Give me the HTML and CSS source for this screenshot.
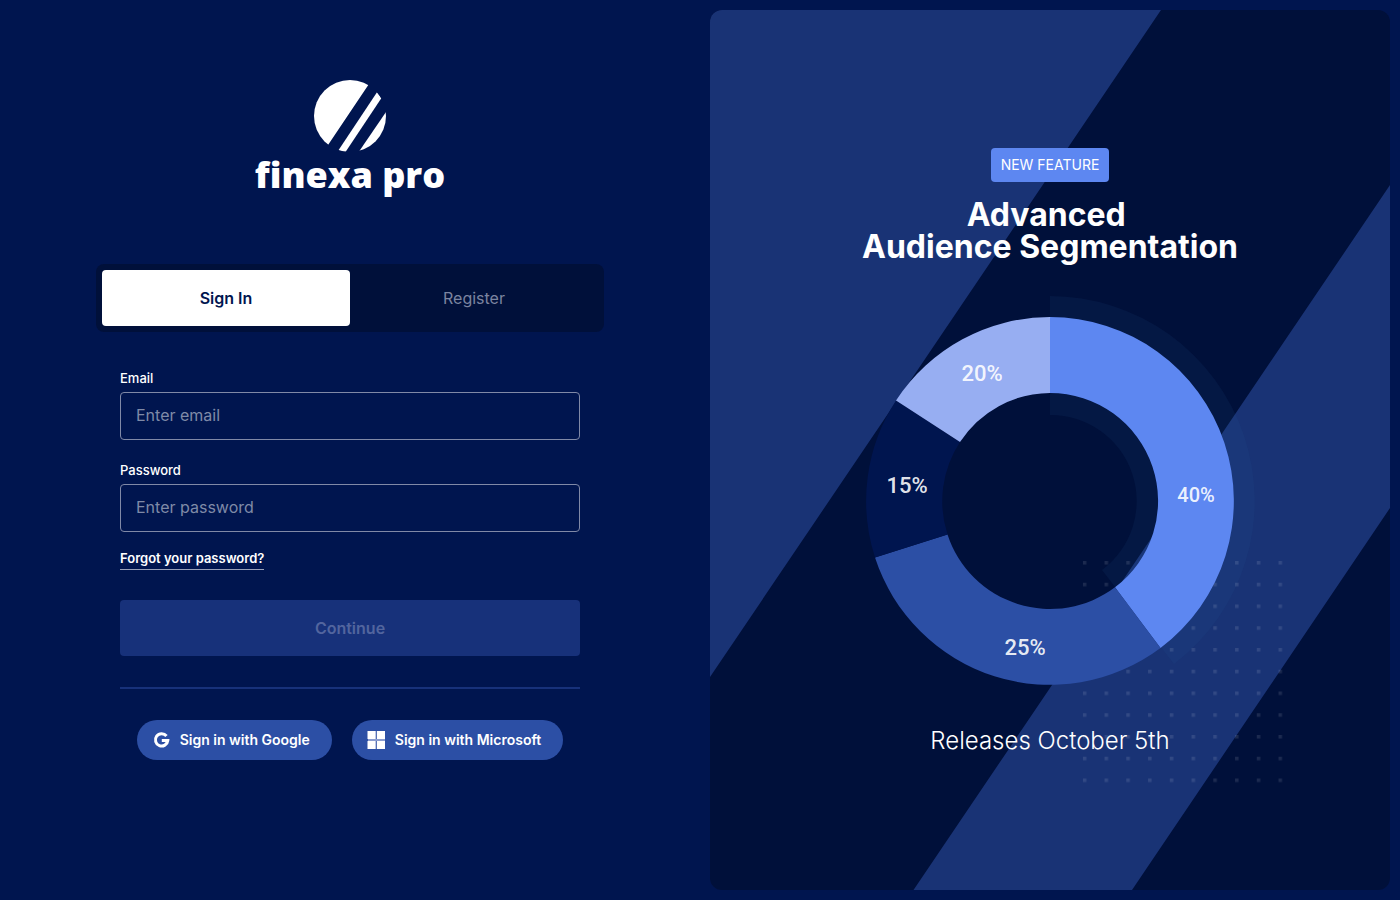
FILE: index.html
```html
<!DOCTYPE html>
<html lang="en">
<head>
<meta charset="utf-8">
<meta name="viewport" content="width=device-width, initial-scale=1">
<title>Finexa Pro – Sign In</title>
<link rel="stylesheet" href="styles.css">
</head>
<body>
<main class="layout">
  <section class="auth">
    <div class="brand">
      <svg class="brand-mark" viewBox="0 0 72 72" aria-hidden="true">
        <clipPath id="disc"><circle cx="36" cy="36" r="36"/></clipPath>
        <g fill="#fff" clip-path="url(#disc)">
          <path d="M0 0H57.600L54.300 5L14.700 64L9.400 72H0Z"/>
          <path d="M63 12.300L67.300 18.300L31.500 72H23.300Z"/>
          <path d="M72 32L44.700 72H72Z"/>
        </g>
      </svg>
      <span class="brand-name">finexa pro</span>
    </div>
    <div class="panel">
      <div class="tabs" role="tablist">
        <button class="tab tab-active" type="button" role="tab" aria-selected="true">Sign In</button>
        <button class="tab" type="button" role="tab" aria-selected="false">Register</button>
      </div>
      <form class="form">
        <div class="field">
          <label for="email">Email</label>
          <input id="email" type="email" placeholder="Enter email">
        </div>
        <div class="field">
          <label for="password">Password</label>
          <input id="password" type="password" placeholder="Enter password">
        </div>
        <a class="forgot" href="#forgot">Forgot your password?</a>
        <button class="submit" type="submit" disabled>Continue</button>
        <hr class="divider">
        <div class="social">
          <button class="pill" type="button">
            <svg class="pill-icon" viewBox="0 0 20 20" aria-hidden="true"><path d="M15.500 6A6.200 6.200 0 1 0 16.800 10.500H10.800" fill="none" stroke="#fff" stroke-width="3"/></svg>
            Sign in with Google
          </button>
          <button class="pill" type="button">
            <svg class="pill-icon" viewBox="0 0 20 20" aria-hidden="true"><path fill="#8a9ccf" d="M2 9h17v2H2z"/><path fill="#fff" d="M1.500 1h8.200v8H1.500zM10.800 1H19v8h-8.200zM1.500 11h8.200v8H1.500zM10.800 11H19v8h-8.200z"/></svg>
            Sign in with Microsoft
          </button>
        </div>
      </form>
    </div>
  </section>
  <aside class="promo">
    <svg class="promo-bg" viewBox="0 0 680 880" preserveAspectRatio="none" aria-hidden="true">
      <path fill="#193375" d="M0 0H451L0 667ZM680 175V498L422 880H203.500Z"/>
    </svg>
    <div class="promo-content">
      <span class="badge">NEW FEATURE</span>
      <h1 class="promo-title"><span class="title-line">Advanced&nbsp;</span><span class="title-line">Audience Segmentation</span></h1>
      <svg class="chart" viewBox="-205 -205 410 410" role="img" aria-label="Audience segments">
        <defs>
          <pattern id="dots" x="32.800" y="60" width="21.750" height="21.750" patternUnits="userSpaceOnUse">
            <rect width="3.500" height="3.500" fill="#fff" fill-opacity=".11"/>
          </pattern>
        </defs>
        <path fill="#2a5f9c" fill-opacity=".1" d="M0-205A205 205 0 0 1 124 163L52 69A86 86 0 0 0 0-86Z"/>
        <rect x="32.800" y="60" width="200" height="222" fill="url(#dots)"/>
        <path fill="#5d87f1" d="M0-184A184 184 0 0 1 110.500 147L65 86.300A108 108 0 0 0 0-108Z"/>
        <path fill="#2c4fa5" d="M110.500 147A184 184 0 0 1-175 56.500L-102.500 33.500A108 108 0 0 0 65 86.300Z"/>
        <path fill="#00154f" d="M-175 56.500A184 184 0 0 1-154-100.500L-90-59A108 108 0 0 0-102.500 33.500Z"/>
        <path fill="#97aef2" d="M-154-100.500A184 184 0 0 1 0-184V-108A108 108 0 0 0-90-59Z"/>
        <g class="chart-labels">
          <text x="-68" y="-120">20%</text>
          <text class="label-small" x="146" y="1">40%</text>
          <text x="-143" y="-8">15%</text>
          <text x="-25" y="154">25%</text>
        </g>
      </svg>
      <p class="release">Releases October 5th</p>
    </div>
  </aside>
</main>
</body>
</html>
```
FILE: styles.css
```css
*,
*::before,
*::after {
  box-sizing: border-box;
}

body {
  margin: 0;
  background: #00154f;
  color: #fff;
  font-family: Inter, "Liberation Sans", sans-serif;
}

button,
input {
  font: inherit;
  color: inherit;
}

.layout {
  display: grid;
  grid-template-columns: 1fr 1fr;
  min-height: 100vh;
}

.auth {
  display: flex;
  flex-direction: column;
  align-items: center;
  padding: 80px 24px 40px;
}

.brand {
  display: flex;
  flex-direction: column;
  align-items: center;
  margin-bottom: 64px;
}

.brand-mark {
  width: 72px;
  height: 72px;
}

.brand-name {
  margin-bottom: 2px;
  font-family: "Open Sans", "Noto Sans", sans-serif;
  font-size: 36px;
  font-weight: 800;
  font-variant-ligatures: none;
  line-height: 46px;
}

.panel {
  width: 100%;
  max-width: 508px;
}

.tabs {
  display: grid;
  grid-template-columns: 1fr 1fr;
  padding: 6px;
  border-radius: 8px;
  background: #00103a;
}

.tab {
  height: 56px;
  padding: 0;
  border: 0;
  border-radius: 4px;
  background: transparent;
  color: #7b84a0;
  font-size: 16px;
}

.tab-active {
  background: #fff;
  color: #00154f;
  font-weight: 600;
}

.form {
  display: flex;
  flex-direction: column;
  padding: 36px 24px 0;
}

.field {
  display: flex;
  flex-direction: column;
  margin-bottom: 20px;
}

.field label {
  margin-bottom: 4px;
  font-size: 13px;
  font-weight: 500;
  line-height: 20px;
}

.field input {
  width: 100%;
  height: 48px;
  padding: 0 15px 2px;
  border: 1px solid #8089a7;
  border-radius: 4px;
  outline: 0;
  background: transparent;
  font-size: 16px;
}

.field input::placeholder {
  color: #7f8aa7;
  opacity: 1;
}

.forgot {
  align-self: flex-start;
  margin: -2px 0 30px;
  padding-bottom: 2px;
  border-bottom: 1px solid #99a1b9;
  color: #fff;
  font-size: 13px;
  font-weight: 600;
  line-height: 17px;
  text-decoration: none;
}

.submit {
  height: 56px;
  border: 0;
  border-radius: 4px;
  background: #17317a;
  color: #52659e;
  font-size: 16px;
  font-weight: 600;
}

.divider {
  width: 100%;
  height: 2px;
  margin: 31px 0;
  border: 0;
  background: #17317a;
}

.social {
  display: flex;
  flex-wrap: wrap;
  justify-content: center;
  gap: 20px;
}

.pill {
  display: flex;
  align-items: center;
  gap: 9px;
  height: 40px;
  padding: 0 22px 1px 14px;
  border: 0;
  border-radius: 20px;
  background: #2c4fa5;
  font-size: 14px;
  font-weight: 600;
  white-space: nowrap;
}

.pill-icon {
  width: 20px;
  height: 20px;
}

.promo {
  position: relative;
  display: flex;
  justify-content: center;
  margin: 10px;
  padding: 138px 24px 40px;
  overflow: hidden;
  border-radius: 12px;
  background: #00103a;
}

.promo-bg {
  position: absolute;
  inset: 0;
  width: 100%;
  height: 100%;
}

.promo-content {
  position: relative;
  display: flex;
  flex-direction: column;
  align-items: center;
}

.badge {
  padding: 0 10px;
  border-radius: 4px;
  background: #5d87f1;
  font-size: 14px;
  line-height: 34px;
}

.promo-title {
  margin: 17px 0 33px;
  font-size: 32px;
  font-weight: 700;
  line-height: 32px;
  text-align: center;
}

.title-line {
  display: block;
}

.chart {
  width: 410px;
  height: 410px;
  overflow: visible;
}

.chart-labels {
  fill: #fff;
  fill-opacity: .9;
  font-family: Roboto, Inter, sans-serif;
  font-size: 22px;
  font-weight: 500;
  text-anchor: middle;
}

.label-small {
  font-size: 20px;
}

.release {
  position: relative;
  margin: 19px 0 0;
  font-size: 24px;
  font-weight: 300;
  line-height: 32px;
}
```
